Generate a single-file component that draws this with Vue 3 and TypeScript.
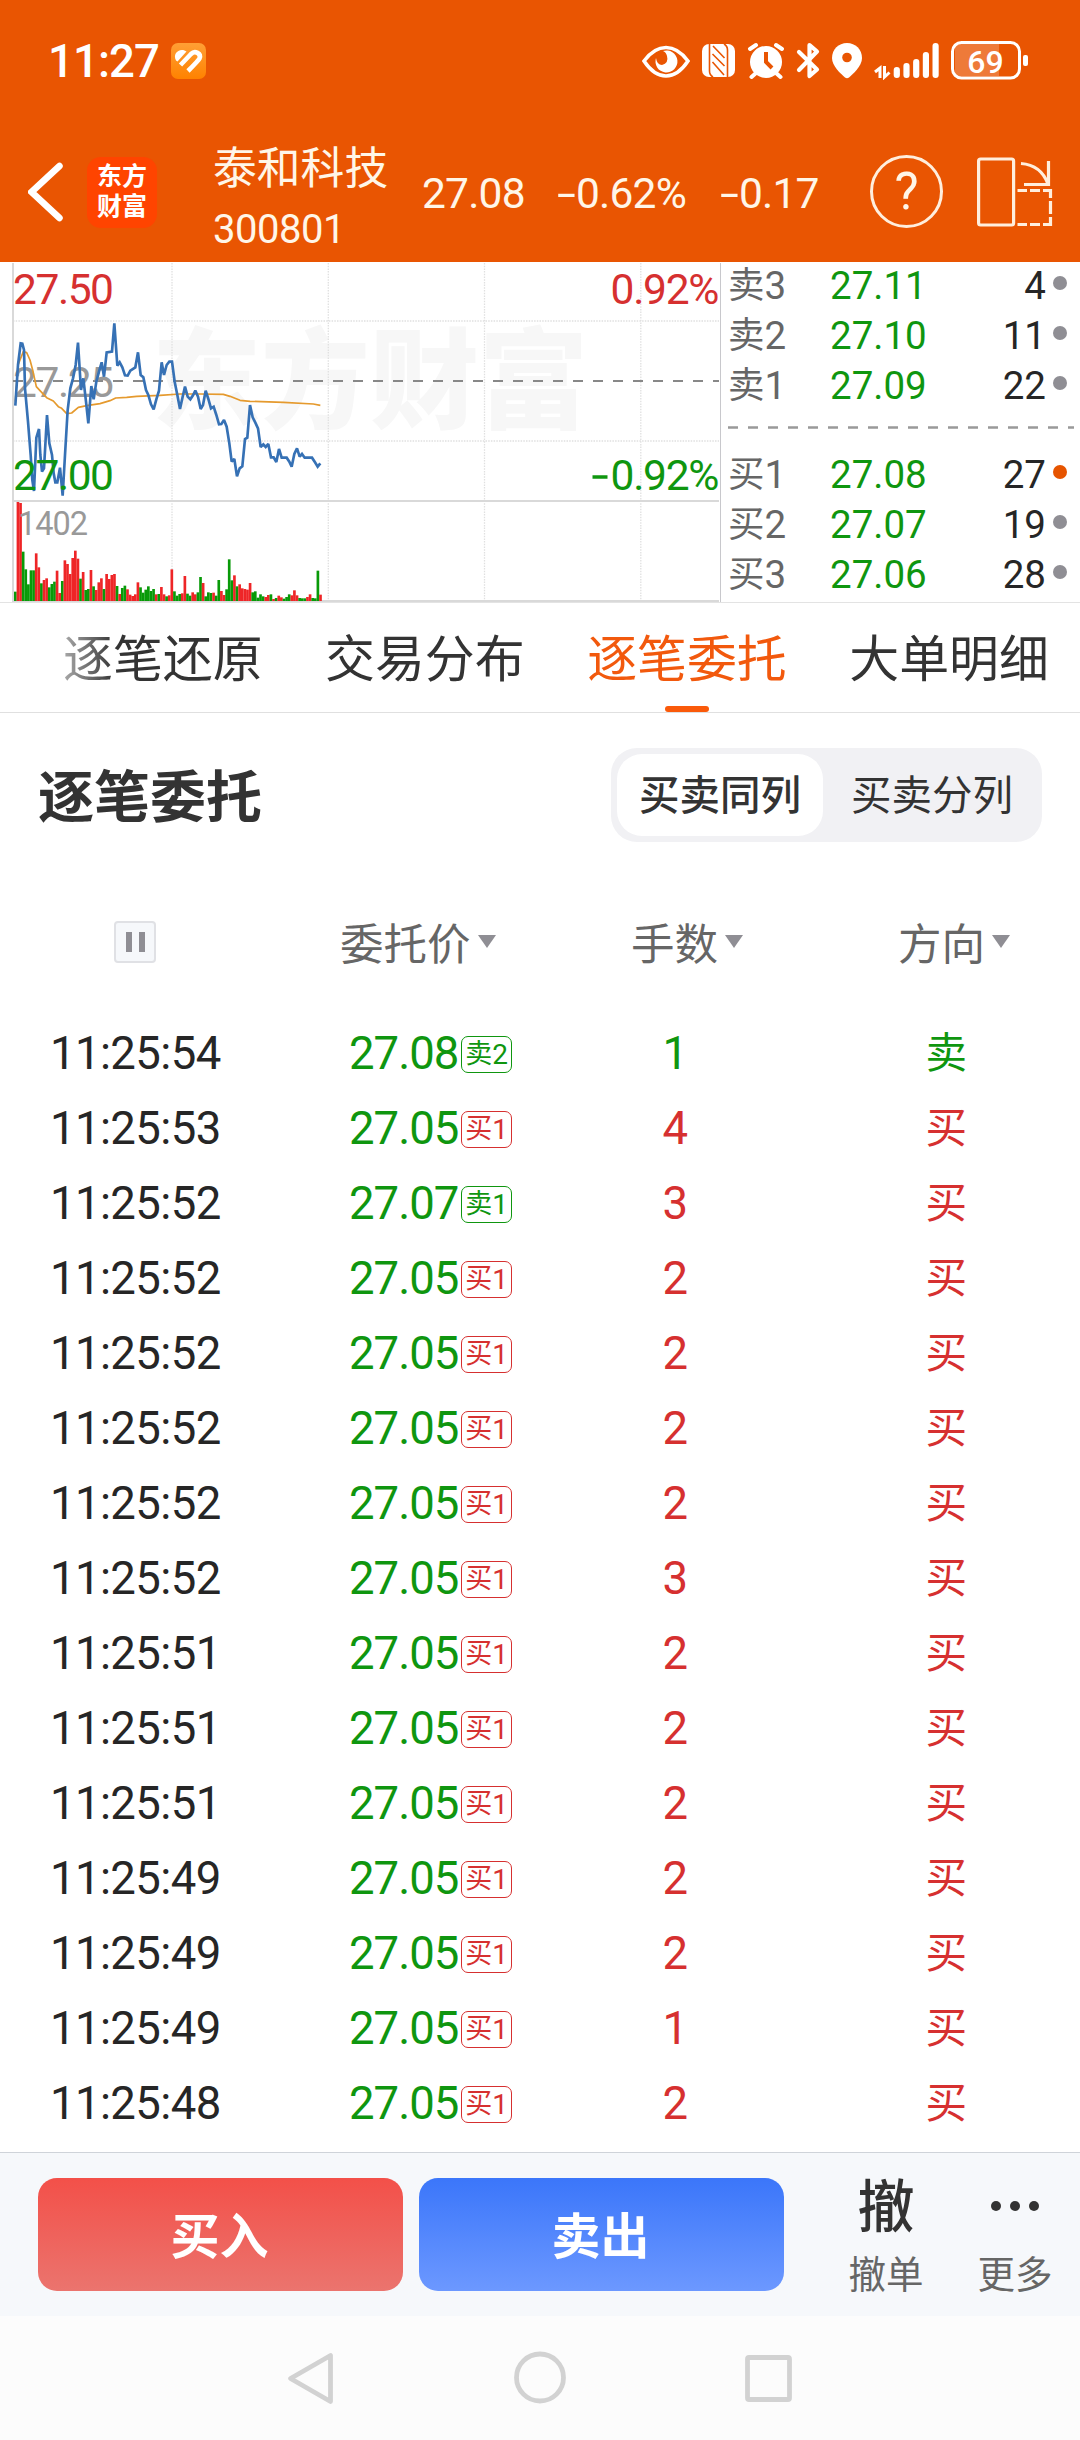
<script setup lang="ts">
interface BookLevel {
  label: string
  level: string
  price: string
  volume: string
  active?: boolean
}

interface Order {
  time: string
  price: string
  side: '买' | '卖'
  tag: string
  tagSide: '买' | '卖'
  lots: number
}

const asks: BookLevel[] = [
  { label: '卖', level: '3', price: '27.11', volume: '4' },
  { label: '卖', level: '2', price: '27.10', volume: '11' },
  { label: '卖', level: '1', price: '27.09', volume: '22' },
]
const bids: BookLevel[] = [
  { label: '买', level: '1', price: '27.08', volume: '27', active: true },
  { label: '买', level: '2', price: '27.07', volume: '19' },
  { label: '买', level: '3', price: '27.06', volume: '28' },
]

const tabs = ['逐笔还原', '交易分布', '逐笔委托', '大单明细']
const activeTab = '逐笔委托'

const buy = (time: string, lots: number): Order => ({
  time, price: '27.05', side: '买', tag: '1', tagSide: '买', lots,
})

const orders: Order[] = [
  { time: '11:25:54', price: '27.08', side: '卖', tag: '2', tagSide: '卖', lots: 1 },
  buy('11:25:53', 4),
  { time: '11:25:52', price: '27.07', side: '买', tag: '1', tagSide: '卖', lots: 3 },
  buy('11:25:52', 2),
  buy('11:25:52', 2),
  buy('11:25:52', 2),
  buy('11:25:52', 2),
  buy('11:25:52', 3),
  buy('11:25:51', 2),
  buy('11:25:51', 2),
  buy('11:25:51', 2),
  buy('11:25:49', 2),
  buy('11:25:49', 2),
  buy('11:25:49', 1),
  buy('11:25:48', 2),
]

// Minute series, in chart units (3 units per pixel).
const priceLine =
  '46,452 54,330 62,265 67,266 72,285 75,400 84,500 92,600 97,675 102,708 109,548 117,522 121,600 126,650 132,640 136,570 141,480 148,565 156,600 161,655 166,682 172,682 180,638 188,722 195,600 203,465 211,400 219,370 227,330 234,263 243,405 250,370 258,440 265,505 274,393 281,433 289,380 297,350 305,322 312,365 320,292 336,290 343,205 352,332 359,322 367,337 375,361 383,362 391,347 406,337 414,292 422,360 430,367 438,405 445,420 453,448 461,463 469,433 477,407 485,322 492,360 500,330 508,320 516,320 524,380 532,420 540,462 548,425 555,395 563,425 571,433 579,421 586,407 594,425 602,462 609,450 617,407 625,432 633,460 641,455 649,480 657,508 664,507 672,495 680,515 688,565 695,620 703,612 711,664 719,640 727,634 735,552 742,548 750,450 758,487 766,503 774,520 782,576 790,568 797,576 805,567 813,607 821,607 829,621 837,582 845,608 860,608 868,620 875,635 883,597 891,580 899,605 906,597 914,608 936,608 945,622 953,635 961,625'
const averageLine =
  '46,440 54,330 70,290 80,293 90,315 98,345 109,395 120,407 140,428 160,438 175,455 185,460 200,476 215,474 235,457 260,452 300,446 330,437 347,429 380,427 410,424 480,421 540,417 600,417 670,418 690,424 720,436 750,439 850,442 940,447 961,451'

const volumeData =
  'g1010 r741 r744 g890 g943 g988 g946 g946 r895 r937 g985 r975 r970 g997 g987 g980 r947 r1014 g978 r916 r927 r957 r909 r887 r911 g971 r951 g1005 g1002 r945 g994 r1005 r982 r970 g1002 r957 r972 r960 r957 g993 r1017 g999 g992 r1003 r1019 r1023 r1018 r982 g997 g1013 g1004 g994 g1008 g1002 r1018 g1017 r996 r1018 g1024 r1021 r943 g1009 g1022 g1017 r1015 r963 g1016 g1022 r1012 r1018 g1012 g966 r984 g1024 g1012 g1014 r1013 g1022 g975 r1008 r1020 g1003 g913 g976 r961 g994 r988 r1000 r1002 r1004 r984 g1012 g1009 g1028 g1018 g1024 r1026 r1020 g1018 r1032 g1029 r1022 r1027 g1031 g1026 g1018 r1021 r1006 r1021 g1029 g1030 g1030 r1026 r1018 g1029 g1030 g947 r1019'
const volumes = volumeData.split(' ').map((v, i) => ({
  x: 42 + i * 7.825,
  y: Number(v.slice(1)),
  fill: v[0] === 'r' ? '#ee2527' : '#089a08',
}))

const signal = [67, 63, 59, 52, 43]
</script>

<template>
  <div class="screen">
    <header class="top">
      <div class="status">
        <span class="clock">11:27</span>
        <svg class="health" width="36" height="36" viewBox="0 0 36 36">
          <defs>
            <linearGradient id="hg" x1="0" y1="0" x2="0" y2="1">
              <stop offset="0" stop-color="#ff9f35" />
              <stop offset="1" stop-color="#ff8200" />
            </linearGradient>
          </defs>
          <rect width="35" height="36" rx="7" fill="url(#hg)" />
          <path d="M5 17.500 C1.500 11.500 7 5.500 13.500 7.500 L15.500 8.500 L6.500 18.500Z" fill="#fff" />
          <path d="M9.500 22 L20 11 C24 7 30.500 10.500 28.500 15.500 C27.500 17.500 26 19 17 28" fill="none" stroke="#fff" stroke-width="4.600" />
        </svg>
        <svg class="sysicons" width="390" height="40" viewBox="640 40 390 40">
          <path d="M644 61 Q654 47.500 666 47.500 Q678 47.500 688 61 Q678 76 666 76 Q654 76 644 61Z" fill="none" stroke="#fff" stroke-width="3.600" />
          <path d="M663 51 A11 11 0 1 1 656 58 Q657 65 662 65 Q669 63 667 56 Q666 52 663 51Z" fill="#fff" />
          <rect x="702" y="44" width="33" height="33" rx="7" fill="#fff" />
          <path d="M709.500 44 V71 Q709.500 75 713 77 M727.500 77 V50 Q727.500 46 724 44" fill="none" stroke="#e95502" stroke-width="1.600" />
          <path d="M712.500 54 L724.500 66 M712.500 62 L724 75 M713 46 L724.500 58" stroke="#e95502" stroke-width="1.600" />
          <circle cx="766" cy="62" r="16" fill="#fff" />
          <path d="M750 49 L756 45 M782 49 L776 45 M756 73 L751.500 77 M776 73 L780.500 77" stroke="#fff" stroke-width="4" stroke-linecap="round" />
          <path d="M766 52 V62 L772 68" fill="none" stroke="#e95502" stroke-width="4" />
          <path d="M799 52 L817 69.500 L809.500 76 V45 L817 51.500 L799 70" fill="none" stroke="#fff" stroke-width="4.200" stroke-linejoin="round" stroke-linecap="round" />
          <path d="M847 43 C838.500 43 832 49.500 832 58 C832 66 841 74 845 77.500 Q847 79 849 77.500 C853 74 862 66 862 58 C862 49.500 855.500 43 847 43Z" fill="#fff" />
          <circle cx="847" cy="57.500" r="4.800" fill="#e95502" />
          <path d="M880 78 V68 L875 72 M884.500 66 V77 L889.500 72.500" fill="none" stroke="#fff" stroke-width="3" />
          <rect v-for="(y, i) in signal" :key="y" :x="893.700 + i * 9.700" :y="y" width="6.200" :height="78 - y" rx="3" fill="#fff" />
          <rect x="955" y="44" width="44" height="32" fill="#fff" opacity=".22" />
          <rect x="952.500" y="42.500" width="67" height="35.500" rx="9" fill="none" stroke="#fff" stroke-width="3" />
          <rect x="1023" y="55" width="5" height="11" rx="2" fill="#fff" />
          <text x="985.500" y="72.500" text-anchor="middle" class="battery">69</text>
        </svg>
      </div>

      <div class="quote">
        <svg class="back" width="36" height="62" viewBox="0 0 36 62">
          <path d="M31.500 5 L3.500 31 L31.500 57" fill="none" stroke="#fff" stroke-width="6.500" stroke-linecap="round" />
        </svg>
        <div class="logo"><span>东方</span><span>财富</span></div>
        <div class="stock">
          <span class="name">泰和科技</span>
          <span class="code">300801</span>
        </div>
        <span class="num price">27.08</span>
        <span class="num pct"><i>-</i>0.62%</span>
        <span class="num chg"><i>-</i>0.17</span>
        <div class="help">?</div>
        <svg class="rotate" width="76" height="72" viewBox="978 155 76 72" fill="none" stroke="#ffeedd" stroke-width="3.200">
          <rect x="979.600" y="158" width="35" height="66" rx="2" />
          <path d="M1022 162.500 Q1042 164 1049 183 M1049.500 160 V183.500 H1025" />
          <path d="M1018.500 189.500 H1028 M1031 189.500 H1041 M1044 189.500 H1051.500 V197 M1051.500 200 V213 M1051.500 216 V223.500 H1044 M1041 223.500 H1031 M1028 223.500 H1018.500" />
        </svg>
      </div>
    </header>

    <section class="market">
      <svg class="chart" width="721" height="340" viewBox="0 0 721 340">
        <text x="152" y="158" class="watermark" textLength="436">东方财富</text>
        <g stroke="#e0e0e0" stroke-width="1.300" stroke-dasharray="1.500 1.200">
          <path d="M172 1 V339 M328.300 1 V339 M484.500 1 V339 M640.800 1 V339 M13 59 H719 M13 179 H719" />
        </g>
        <path d="M13 1 V340 M13 239 H719 M13 339 H719" stroke="#d9d9d9" stroke-width="2" />
        <path d="M720.500 1 V340" stroke="#c8c8cc" stroke-width="1" />
        <path d="M13 119 H719" stroke="#888" stroke-width="2" stroke-dasharray="10 10" />
        <g transform="translate(0 -7) scale(.33333)">
          <rect v-for="v in volumes" :key="v.x" :x="v.x" :y="v.y" width="8" :height="1038 - v.y" :fill="v.fill" />
        </g>
        <text x="13" y="42" textLength="101" fill="#d63030">27.50</text>
        <text x="13" y="135" textLength="101" fill="#999">27.25</text>
        <text x="18" y="273" textLength="70" class="vol" fill="#999">1402</text>
        <text x="719.500" y="42" text-anchor="end" textLength="109" fill="#d63030">0.92%</text>
        <text x="719.500" y="228" text-anchor="end" textLength="109" fill="#0f960f">0.92%</text>
        <path d="M592.500 215 H607.500" stroke="#0f960f" stroke-width="3.500" />
        <g transform="translate(0 -7) scale(.33333)" fill="none" stroke-linejoin="round">
          <polyline :points="averageLine" stroke="#e59a2e" stroke-width="5" />
          <polyline :points="priceLine" stroke="#3671b5" stroke-width="8" stroke-linejoin="miter" stroke-miterlimit="2" />
        </g>
        <text x="13" y="228" textLength="101" fill="#0f960f">27.00</text>
      </svg>
      <div class="book">
        <div v-for="a in asks" :key="a.price" class="level">
          <span class="lab"><b>{{ a.label }}</b>{{ a.level }}</span>
          <span class="bp">{{ a.price }}</span>
          <span class="bv">{{ a.volume }}</span>
          <span class="dot"></span>
        </div>
        <svg class="divider" width="346" height="38"><path d="M0 15.500 H346" stroke="#999" stroke-width="2.500" stroke-dasharray="10 10" /></svg>
        <div v-for="b in bids" :key="b.price" class="level">
          <span class="lab"><b>{{ b.label }}</b>{{ b.level }}</span>
          <span class="bp">{{ b.price }}</span>
          <span class="bv">{{ b.volume }}</span>
          <span class="dot" :class="{ on: b.active }"></span>
        </div>
      </div>
    </section>

    <nav class="tabs">
      <span v-for="(t, i) in tabs" :key="t" class="tab" :class="{ active: t === activeTab, faded: i === 0 }">{{ t }}</span>
    </nav>

    <section class="title">
      <h1>逐笔委托</h1>
      <div class="segment">
        <span class="seg on">买卖同列</span>
        <span class="seg">买卖分列</span>
      </div>
    </section>

    <div class="grid thead">
      <div class="c1"><span class="pause"></span></div>
      <div class="c2">委托价<i class="tri"></i></div>
      <div class="c3">手数<i class="tri"></i></div>
      <div class="c4">方向<i class="tri"></i></div>
    </div>

    <div class="list">
      <div v-for="(o, i) in orders" :key="i" class="grid row">
        <div class="c1">{{ o.time }}</div>
        <div class="c2">
          <span class="op">{{ o.price }}</span>
          <span class="tag" :class="o.tagSide === '买' ? 'red' : 'green'"><b>{{ o.tagSide }}</b>{{ o.tag }}</span>
        </div>
        <div class="c3" :class="o.side === '买' ? 'red' : 'green'">{{ o.lots }}</div>
        <div class="c4" :class="o.side === '买' ? 'red' : 'green'">{{ o.side }}</div>
      </div>
    </div>

    <footer class="actions">
      <button class="btn buy">买入</button>
      <button class="btn sell">卖出</button>
      <div class="act cancel"><span class="glyph">撤</span><span class="cap">撤单</span></div>
      <div class="act more">
        <span class="glyph dots"><i></i><i></i><i></i></span>
        <span class="cap">更多</span>
      </div>
    </footer>

    <div class="navbar">
      <svg width="1080" height="124" fill="none" stroke="#d2d2d2" stroke-width="4.800" stroke-linejoin="round">
        <path d="M290.500 62.500 L330.500 39.500 V85.500 Z" />
        <circle cx="540" cy="61.500" r="23.500" />
        <rect x="747.500" y="41.500" width="42" height="42" rx="1.500" />
      </svg>
    </div>
  </div>
</template>

<style>
body { background: #fff; }
</style>

<style scoped>
.screen {
  width: 1080px;
  height: 2440px;
  overflow: hidden;
  display: flex;
  flex-direction: column;
  background: #fff;
  color: #262626;
  font-family: Roboto, "Noto Sans CJK SC", sans-serif;
}
.screen * { box-sizing: border-box; }
i { font-style: normal; }
b { font-weight: 400; }

.top { height: 262px; flex: none; background: #e95502; color: #fff; display: flex; flex-direction: column; }
.status { height: 122px; display: flex; align-items: center; padding: 0 50px 0 48px; }
.clock { font-size: 45.5px; font-weight: 500; letter-spacing: -.9px; line-height: 60px; width: 123px; padding-top: 2px; }
.health { display: block; }
.sysicons { display: block; margin-left: auto; position: relative; top: -1px; }
.battery { font: 500 32px Roboto, sans-serif; fill: #fff; }

.quote { height: 140px; display: flex; align-items: center; color: #fff6e8; }
.back { margin-left: 28px; flex: none; }
.logo {
  width: 70px; height: 71px; margin-left: 23px; border-radius: 14px; background: #ff4400; flex: none;
  display: flex; flex-direction: column; align-items: center; justify-content: center; color: #fff;
}
.logo span { font-size: 25px; line-height: 30px; font-weight: 700; }
.stock { margin-left: 56px; width: 209px; flex: none; display: flex; flex-direction: column; padding-top: 15px; }
.name { font-size: 43.8px; line-height: 60px; white-space: nowrap; }
.code { font-size: 40px; line-height: 62px; letter-spacing: -.5px; }
.num { font-size: 42.5px; letter-spacing: -.8px; white-space: nowrap; line-height: 60px; padding-top: 3px; flex: none; }
.num i { display: inline-block; width: 19px; transform: scaleX(1.6); transform-origin: 0 50%; }
.price { width: 135px; }
.pct { width: 163px; }
.chg { width: 150px; }
.help {
  width: 73px; height: 73px; border: 3px solid #ffeedd; border-radius: 50%; margin-bottom: 2px;
  font-size: 51px; line-height: 68px; text-align: center; font-weight: 400; flex: none;
}
.rotate { margin-left: 34px; margin-bottom: 1px; flex: none; }

.market { height: 341px; flex: none; display: flex; border-bottom: 1px solid #e3e3e3; }
.chart { flex: none; display: block; font-size: 42.5px; }
.vol { font-size: 32.5px; }
.watermark { font-size: 109px; font-weight: 900; fill: #f7f7f7; }
.book { flex: 1; padding-left: 7px; display: flex; flex-direction: column; }
.level { height: 50px; display: flex; align-items: center; font-size: 38.5px; line-height: 48px; padding-bottom: 2px; color: #262626; flex: none; }
.lab { width: 102px; color: #666; display: flex; align-items: center; }
.lab b { font-size: 36.5px; }
.bp { width: 120px; color: #0f960f; }
.bv { width: 96px; text-align: right; }
.dot { width: 14px; height: 14px; border-radius: 50%; background: #8f8e94; margin-left: 7px; position: relative; top: -3px; }
.dot.on { background: #e65400; }
.divider { display: block; height: 38px; flex: none; margin-bottom: 1px; }

.tabs { height: 110px; flex: none; border-bottom: 1px solid #e0e0e0; padding-left: 63px; display: flex; gap: 62.5px; }
.tab { position: relative; font-size: 49.9px; line-height: 115px; height: 109px; color: #333; white-space: nowrap; width: 199.6px; flex: none; }
.tab.active { color: #f2590d; }
.tab.active::after {
  content: ""; position: absolute; left: 78px; bottom: 0; width: 44px; height: 6px; border-radius: 3px; background: #fa5a0a;
}
.tab.faded { background: linear-gradient(90deg, #aaa, #333 52px); -webkit-background-clip: text; background-clip: text; color: transparent; }

.title { height: 166px; flex: none; display: flex; align-items: center; justify-content: space-between; padding: 0 38px 2px 38px; }
h1 { margin: 0; font-size: 56px; font-weight: 700; color: #333; line-height: 80px; padding-top: 5px; }
.segment { width: 431px; height: 94px; border-radius: 26px; background: #f1f1f4; padding: 6px; display: flex; }
.seg { width: 206px; height: 82px; line-height: 84px; text-align: center; font-size: 40.5px; color: #333; border-radius: 25px; }
.seg.on { background: #fff; font-weight: 500; }
.seg:last-child { margin-left: 6px; }

.grid { display: flex; align-items: center; }
.grid > div { flex: none; }
.thead { height: 137px; font-size: 43.5px; color: #666; padding-bottom: 12px; flex: none; }
.thead > div { display: flex; align-items: center; white-space: nowrap; }
.pause {
  width: 42px; height: 42px; margin-left: 114px; border: 2px solid #e0e1e5; border-radius: 4px; background: #f6f8fb;
  display: flex; justify-content: center; gap: 7px; align-items: center;
}
.pause::before, .pause::after { content: ""; width: 6px; height: 20px; background: #8f8e94; }
.tri { border: 9.5px solid transparent; border-top: 13px solid #8f8e94; border-bottom: 0; margin-left: 7px; }
.thead .c1 { width: 340px; }
.thead .c2 { width: 291px; }
.thead .c3 { width: 267px; }

.list { height: 1136px; flex: none; }
.row { height: 75px; font-size: 45.5px; letter-spacing: -.6px; line-height: 75px; }
.row .c1 { width: 348px; padding-left: 50px; }
.row .c2 { width: 277px; display: flex; align-items: center; }
.op { color: #0f960f; width: 113px; letter-spacing: -1px; padding-left: 1px; }
.row .c3 { width: 100px; text-align: center; }
.row .c4 { width: 100px; margin-left: 171px; text-align: center; font-size: 41.5px; }
.tag {
  width: 51px; height: 37px; border: 1px solid; border-radius: 7px; font-size: 28px; line-height: 35px;
  display: flex; align-items: center; justify-content: center; letter-spacing: 0; position: relative; top: 1px;
}
.tag b { font-size: 27px; }
.red { color: #d63030; }
.green { color: #0f960f; }

.actions { height: 164px; flex: none; background: #f6f8fb; border-top: 1px solid #cfd3d9; display: flex; padding: 25px 0 0 38px; }
.btn { width: 365px; height: 113px; border: 0; border-radius: 19px; color: #fff; font: 700 49px/110px "Noto Sans CJK SC", sans-serif; padding: 0 2px 3px 0; margin-right: 16px; }
.buy { background: linear-gradient(#f35049, #eb746e); }
.sell { background: linear-gradient(#3b76fa, #6c98ff); }
.act { display: flex; flex-direction: column; align-items: center; color: #333; }
.cancel { width: 90px; margin-left: 41px; }
.more { width: 90px; margin-left: 39px; }
.glyph { height: 56px; line-height: 59px; font-size: 57px; font-weight: 500; }
.dots { display: flex; align-items: center; gap: 9px; }
.dots i { width: 10px; height: 10px; border-radius: 50%; background: #333; }
.cap { font-size: 37.5px; line-height: 57px; margin-top: 13px; height: 57px; color: #666; }

.navbar { height: 124px; flex: none; background: #fcfcfc; }
.navbar svg { display: block; }
</style>
